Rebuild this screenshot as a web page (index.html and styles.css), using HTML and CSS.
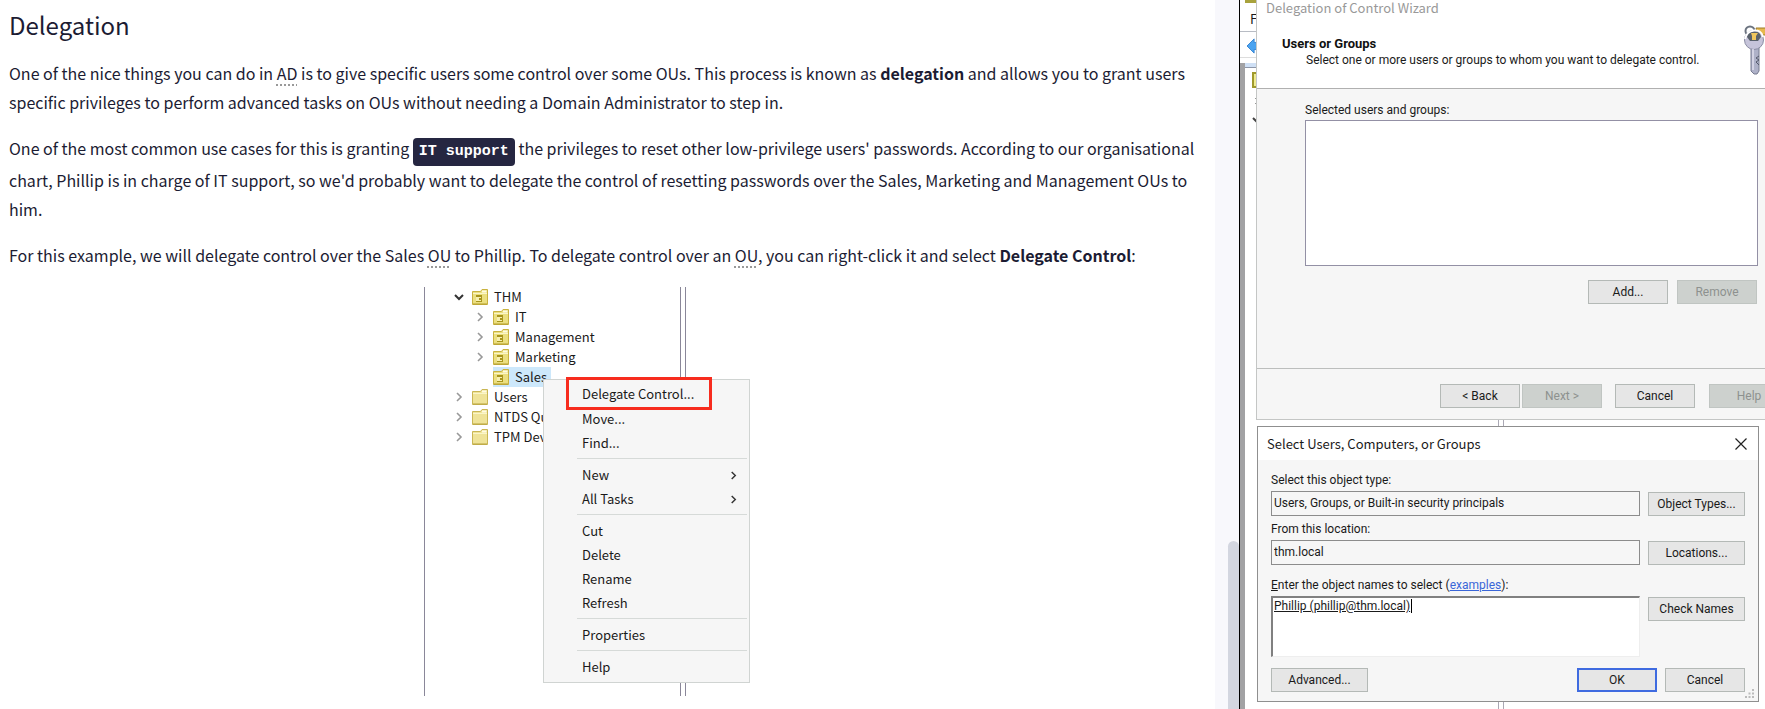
FILE: index.html
```html
<!DOCTYPE html>
<html lang="en">
<head>
<meta charset="utf-8">
<title>Delegation</title>
<link rel="stylesheet" href="styles.css">
</head>
<body>
<svg class="sprite" aria-hidden="true">
  <symbol id="folder" viewBox="0 0 16 16">
    <path d="M.5 2.500h8l1.500-2h5.500v15H.5z" fill="#efe398" stroke="#c9b654"/>
    <path d="M10 2.500h4.500" stroke="#fffbe0" stroke-width="2"/>
    <path d="M1 4.500h14" stroke="#faf5c8"/>
    <path d="M1 15h14" stroke="#b7a23c"/>
  </symbol>
  <symbol id="ou" viewBox="0 0 16 16">
    <path d="M.5 2.500h8l1.500-2h5.500v15H.5z" fill="#ebdf80" stroke="#c9b23f"/>
    <path d="M10 2.500h4.500" stroke="#fffbe0" stroke-width="2"/>
    <path d="M1 4.500h14" stroke="#faf5c8"/>
    <path d="M4 6h6v7H4z" fill="#a8951c"/>
    <path d="M4 8h5v1H7v2h2v1H4z" fill="#f6efb0"/>
    <path d="M1 15h14" stroke="#b39c2c"/>
  </symbol>
  <symbol id="right" viewBox="0 0 10 10"><path d="M3 1l4 4-4 4" fill="none" stroke="currentColor" stroke-width="1.600"/></symbol>
  <symbol id="down" viewBox="0 0 10 10"><path d="M1 3l4 4 4-4" fill="none" stroke="currentColor" stroke-width="2"/></symbol>
</svg>

<main class="article">
  <h1>Delegation</h1>
  <p>One of the nice things you can do in <abbr>AD</abbr> is to give specific users some control over some OUs. This process is known as <strong>delegation</strong> and allows you to grant users specific privileges to perform advanced tasks on OUs without needing a Domain Administrator to step in.</p>
  <p>One of the most common use cases for this is granting <code>IT support</code> the privileges to reset other low-privilege users' passwords. According to our organisational chart, Phillip is in charge of IT support, so we'd probably want to delegate the control of resetting passwords over the Sales, Marketing and Management OUs to him.</p>
  <p>For this example, we will delegate control over the Sales <abbr>OU</abbr> to Phillip. To delegate control over an <abbr>OU</abbr>, you can right-click it and select <strong>Delegate Control</strong>:</p>

  <figure class="shot">
    <div class="pane">
      <ul class="tree">
        <li><svg class="open"><use href="#down"/></svg><svg class="ico"><use href="#ou"/></svg><span>THM</span></li>
        <li class="child"><svg class="arrow"><use href="#right"/></svg><svg class="ico"><use href="#ou"/></svg><span>IT</span></li>
        <li class="child"><svg class="arrow"><use href="#right"/></svg><svg class="ico"><use href="#ou"/></svg><span>Management</span></li>
        <li class="child"><svg class="arrow"><use href="#right"/></svg><svg class="ico"><use href="#ou"/></svg><span>Marketing</span></li>
        <li class="child"><svg class="arrow"></svg><span class="selected"><svg class="ico"><use href="#ou"/></svg><span>Sales</span></span></li>
        <li><svg class="arrow"><use href="#right"/></svg><svg class="ico"><use href="#folder"/></svg><span>Users</span></li>
        <li><svg class="arrow"><use href="#right"/></svg><svg class="ico"><use href="#folder"/></svg><span>NTDS Qu</span></li>
        <li><svg class="arrow"><use href="#right"/></svg><svg class="ico"><use href="#folder"/></svg><span>TPM Dev</span></li>
      </ul>
    </div>
    <div class="menu">
      <button type="button" class="marked">Delegate Control...</button>
      <button type="button">Move...</button>
      <button type="button">Find...</button>
      <hr>
      <button type="button">New<svg><use href="#right"/></svg></button>
      <button type="button">All Tasks<svg><use href="#right"/></svg></button>
      <hr>
      <button type="button">Cut</button>
      <button type="button">Delete</button>
      <button type="button">Rename</button>
      <button type="button">Refresh</button>
      <hr>
      <button type="button">Properties</button>
      <hr>
      <button type="button">Help</button>
    </div>
  </figure>
</main>

<div class="gutter"><div class="thumb"></div></div>

<aside class="desktop">
  <div class="console">
    <div class="bar top"></div>
    <div class="bar file">F</div>
    <div class="bar tools"><svg viewBox="0 0 20 18"><path d="M1 9L9 1v4h10v8H9v4z" fill="#4aa3f0" stroke="#2f7fd0"/></svg></div>
    <div class="client">
      <div class="strip"></div>
      <svg viewBox="0 0 12 56"><path d="M8 5h10v14H8z" fill="#eeeb92" stroke="#a09a2c" stroke-width="2"/><path d="M10 30l3 3-3 3" fill="none" stroke="#999"/><path d="M8 50l4 4 4-4" fill="none" stroke="#444" stroke-width="2"/></svg>
      <div class="splitter"></div>
    </div>
  </div>

  <section class="wizard">
    <header>
      <div class="caption">Delegation of Control Wizard</div>
      <div class="intro">
        <div>
          <h2>Users or Groups</h2>
          <p>Select one or more users or groups to whom you want to delegate control.</p>
        </div>
        <svg class="keys" viewBox="0 0 48 50">
          <path d="M12 3h30l3 4-4 3H14z" fill="#e6b84c" stroke="#9c7a2a"/>
          <circle cx="6" cy="6" r="4.500" fill="none" stroke="#6c7480" stroke-width="2"/>
          <path d="M7 22h8v24l-2 3h-3l-3-3z" fill="#aeb1c8" stroke="#777b90"/>
          <circle cx="10" cy="15" r="9.500" fill="#c6c4da" stroke="#8b8da3"/>
          <path d="M3 12a7 6 0 0 1 14 0l-3 4H6z" fill="#59616b"/>
          <path d="M7 8h7l-2 3v4H8v-4z" fill="#efc65d"/>
          <path d="M1 14c2-10 16-12 18-2" fill="none" stroke="#fff" stroke-width="2"/>
          <path d="M9 24v21" stroke="#e1e1ef" stroke-width="1.500"/>
          <path d="M15 31l-3 2 3 2-3 2 3 3" fill="none" stroke="#555a6c"/>
        </svg>
      </div>
    </header>
    <div class="body">
      <label for="chosen">Selected users and groups:</label>
      <select id="chosen" size="8"></select>
      <div class="actions">
        <button type="button">Add...</button>
        <button type="button" disabled>Remove</button>
      </div>
    </div>
    <footer>
      <button type="button">&lt; Back</button>
      <button type="button" disabled>Next &gt;</button>
      <button type="button" class="cancel">Cancel</button>
      <button type="button" class="help" disabled>Help</button>
    </footer>
  </section>

  <section class="dialog">
    <header>
      <h2>Select Users, Computers, or Groups</h2>
      <button type="button" class="close" aria-label="Close"><svg viewBox="0 0 12 12"><path d="M.5.5l11 11M11.500.5l-11 11" stroke="#222" stroke-width="1.200"/></svg></button>
    </header>
    <div class="form">
      <label for="type">Select this object type:</label>
      <input id="type" type="text" readonly value="Users, Groups, or Built-in security principals">
      <button type="button">Object Types...</button>
      <label for="from">From this location:</label>
      <input id="from" type="text" readonly value="thm.local">
      <button type="button">Locations...</button>
      <div class="names-label"><label for="names"><u>E</u>nter the object names to select</label> (<a href="#examples">examples</a>):</div>
      <div class="names"><textarea id="names" spellcheck="false">Phillip (phillip@thm.local)</textarea><span class="caret"></span></div>
      <button type="button">Check Names</button>
    </div>
    <footer>
      <button type="button" class="wide">Advanced...</button>
      <button type="button" class="default">OK</button>
      <button type="button">Cancel</button>
    </footer>
    <svg class="grip" viewBox="0 0 10 10"><path d="M7 0h2v2H7zM7 3.500h2v2H7zM3.500 3.500h2v2h-2zM0 7h2v2H0zM3.500 7h2v2h-2zM7 7h2v2H7z" fill="#bbb"/></svg>
  </section>
</aside>
</body>
</html>
```
FILE: styles.css
```css
* { box-sizing: border-box; }

body {
  margin: 0;
  height: 100vh;
  display: flex;
  overflow: hidden;
  background: #fff;
  color: #1c1c33;
  font-family: "Noto Sans CJK SC", "Noto Sans", sans-serif;
}

.sprite { position: absolute; width: 0; height: 0; }
button, input, textarea, select { font: inherit; color: inherit; margin: 0; border-radius: 0; }

/* Article */
.article {
  flex: 1;
  min-width: 0;
  padding: 7px 16px 0 9px;
  font-size: 16px;
  line-height: 29px;
}
h1 { margin: 0 0 17px; font-size: 24px; line-height: 35px; font-weight: 400; }
.article p { margin: 0 0 17px; }
abbr { text-decoration: underline dotted #999 2px; text-underline-offset: 4px; text-decoration-skip-ink: none; }
code {
  display: inline-block;
  padding: 0 6px;
  border-radius: 4px;
  background: #252641;
  color: #fff;
  font: bold 15px/28px "Liberation Mono", monospace;
}

.shot {
  position: relative;
  width: 360px;
  margin: 0 auto;
  font-size: 13px;
  line-height: 20px;
  color: #1a1a1a;
}
.pane {
  width: 262px;
  height: 409px;
  border: solid #8a8799;
  border-width: 0 1px;
  position: relative;
}
.pane::after {
  content: "";
  position: absolute;
  right: 4px;
  top: 0;
  bottom: 0;
  border-left: 1px solid #8a8799;
}
.tree { list-style: none; margin: 0; padding: 0 0 0 29px; }
.tree li { display: flex; align-items: center; height: 20px; }
.tree .child { padding-left: 21px; }
.tree span { white-space: nowrap; }
.tree .ico { width: 16px; height: 16px; margin-right: 6px; flex: none; }
.arrow, .open { width: 10px; height: 10px; margin-right: 8px; flex: none; color: #999; }
.open { color: #333; }
.selected { display: flex; align-items: center; padding-right: 4px; background: #cde8fb; }

.menu {
  position: absolute;
  left: 119px;
  top: 92px;
  width: 207px;
  padding: 3px 2px;
  display: flex;
  flex-direction: column;
  background: #f6f6f6;
  border: 1px solid #d0d4d2;
}
.menu button {
  display: flex;
  align-items: center;
  justify-content: space-between;
  height: 24px;
  padding: 0 9px 0 36px;
  border: 0;
  background: none;
  text-align: left;
}
.menu svg { width: 9px; height: 9px; color: #333; }
.menu hr { width: 170px; margin: 3px 0 4px auto; border: 0; border-top: 1px solid #d6dad8; }
.menu .marked {
  height: 33px;
  margin: -6px 35px -3px 20px;
  padding: 0 0 0 13px;
  border: 3px solid #f72c1e;
}

/* Page scrollbar */
.gutter { width: 24px; background: #f8f8fc; display: flex; justify-content: flex-end; align-items: flex-end; }
.thumb { width: 11px; height: 168px; background: #d3d6e0; border-radius: 6px 6px 0 0; }

/* Remote desktop */
.desktop {
  position: relative;
  width: 526px;
  overflow: hidden;
  border-left: 1px solid #000;
  font: 12px/16px Roboto, "Liberation Sans", sans-serif;
  color: #1a1a1a;
}
.console { height: 100%; display: flex; flex-direction: column; }
.bar { flex: none; }
.top { height: 3px; width: 17px; margin-left: 5px; background: #a8a23c; }
.file { height: 29px; padding: 8px 0 0 10px; border-bottom: 1px solid #b8bcc4; font: 13px/16px "Noto Sans CJK SC", sans-serif; }
.tools { height: 26px; padding: 6px 0 0 5px; border-bottom: 1px solid #ddd; }
.tools svg { width: 20px; height: 16px; }
.client { flex: 1; margin-top: 5px; border-left: 5px solid #a2a2a4; position: relative; }
.strip { height: 5px; background: #cfe0f5; border-bottom: 1px solid #8d96a8; }
.client svg { display: block; width: 12px; height: 56px; }
.splitter { position: absolute; left: 253px; top: 0; bottom: 0; width: 6px; border: solid #aaa8b4; border-width: 0 1px; }

.desktop button { height: 24px; width: 80px; padding: 0; border: 1px solid #b4b9b6; background: #e6e6e6; }
.desktop button:disabled { background: #cdd1ce; border-color: #c0c5c2; color: #8d918f; }

.wizard {
  position: absolute;
  left: 16px;
  right: -32px;
  top: -8px;
  background: #f6f6f6;
  border: 1px solid #c4c6c5;
}
.wizard header { height: 96px; padding: 5px 9px; background: #fff; border-bottom: 1px solid #b0b0b0; }
.caption { font: 13px/20px "Noto Sans CJK SC", sans-serif; color: #999; }
.intro { display: flex; justify-content: space-between; padding: 17px 8px 0 16px; }
.wizard h2 { margin: 0; font-size: 13px; line-height: 17px; font-weight: 700; color: #111; }
.intro p { margin: 0 0 0 24px; line-height: 17px; }
.keys { width: 48px; height: 50px; margin: -10px -13px 0 0; flex: none; }
.wizard .body { height: 280px; padding: 13px 38px 0 48px; border-bottom: 1px solid #bcbebd; }
.wizard label { display: block; line-height: 16px; margin-bottom: 2px; }
.wizard select { display: block; width: 100%; height: 146px; background: #fff; border: 1px solid #9390a5; overflow: hidden; outline: 0; }
.actions { display: flex; justify-content: flex-end; gap: 9px; padding: 14px 1px 0 0; }
.wizard footer { display: flex; padding: 15px 7px 11px; justify-content: flex-end; }
.wizard footer button { margin-right: 2px; }
.wizard footer .cancel { margin-left: 11px; }
.wizard footer .help { margin: 0 0 0 12px; }

.dialog {
  position: absolute;
  left: 17px;
  right: 6px;
  top: 426px;
  background: #f6f6f6;
  border: 1px solid #8f8f8f;
}
.dialog header { display: flex; align-items: center; justify-content: space-between; height: 33px; padding: 0 11px 0 9px; background: #fff; }
.dialog h2 { margin: 0; font: 13px/20px "Noto Sans CJK SC", sans-serif; }
.dialog .close { width: 12px; height: 24px; border: 0; background: none; }
.close svg { display: block; width: 12px; height: 12px; }
.form {
  display: grid;
  grid-template-columns: 1fr 97px;
  column-gap: 8px;
  padding: 12px 13px 0;
  align-items: start;
}
.form > label, .names-label { grid-column: 1 / 3; height: 19px; }
.form > button { width: 97px; margin-top: 1px; }
.form input { height: 25px; width: 100%; padding: 0 2px 2px; border: 1px solid #8c8c8c; background: #f6f6f6; outline: 0; margin-bottom: 5px; }
.form #from { margin-bottom: 12px; }
.form a { color: #3a66d8; }
.names { position: relative; }
.names textarea {
  display: block;
  width: 100%;
  height: 61px;
  padding: 0 1px;
  resize: none;
  outline: 0;
  border: solid #808080;
  border-width: 2px 1px 1px 2px;
  border-right-color: #eee;
  border-bottom-color: #eee;
  background: #fff;
  text-decoration: underline;
  line-height: 16px;
}
.caret { position: absolute; left: 140px; top: 3px; width: 1px; height: 14px; background: #000; }
.dialog footer { display: flex; gap: 8px; padding: 11px 13px 9px; }
.dialog .wide { width: 97px; margin-right: auto; }
.dialog .default { border: 2px solid #3f6be0; }
.grip { position: absolute; right: 3px; bottom: 2px; width: 10px; height: 10px; }
```
